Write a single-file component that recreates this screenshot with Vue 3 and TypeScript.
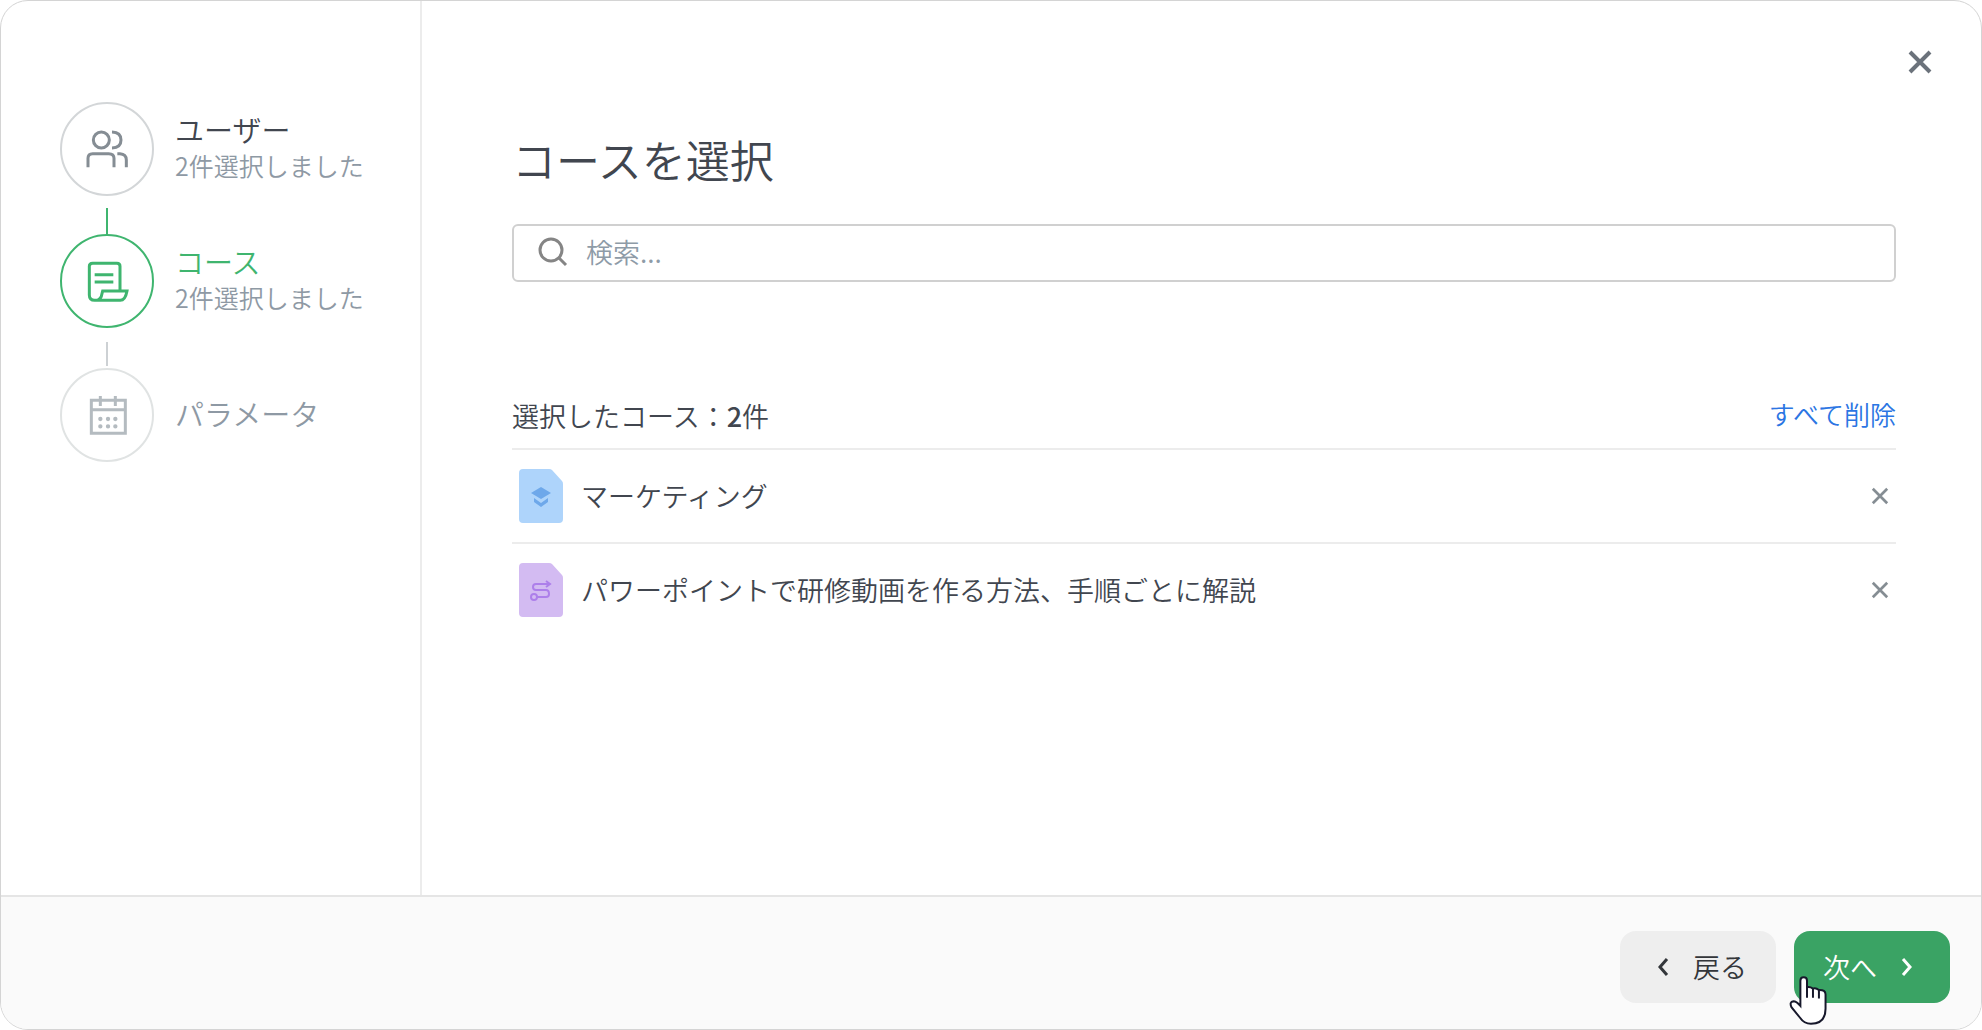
<script setup lang="ts">
import { ref } from 'vue'

type Step = { id: string; label: string; note?: string; state: 'done' | 'active' | 'pending' }
type Course = { id: number; title: string; kind: 'course' | 'path' }

const steps: Step[] = [
  { id: 'users', label: 'ユーザー', note: '2件選択しました', state: 'done' },
  { id: 'courses', label: 'コース', note: '2件選択しました', state: 'active' },
  { id: 'params', label: 'パラメータ', state: 'pending' },
]

const courses = ref<Course[]>([
  { id: 1, title: 'マーケティング', kind: 'course' },
  { id: 2, title: 'パワーポイントで研修動画を作る方法、手順ごとに解説', kind: 'path' },
])
const query = ref('')

function remove(id: number) {
  courses.value = courses.value.filter((c) => c.id !== id)
}
</script>

<template>
  <div class="dialog" role="dialog" aria-labelledby="dialog-title">
    <div class="body">
      <ol class="steps">
        <li v-for="step in steps" :key="step.id" :class="['step', step.state]">
          <span class="circle">
            <svg v-if="step.id === 'users'" viewBox="0 0 144 144" aria-hidden="true">
              <circle cx="55" cy="45" r="24" />
              <path d="M87 21Q114 22 114 45Q114 68 87 69M15 127V100Q15 86 29 86H77Q93 86 93 100V127M103 86H111Q130 87 130 105V127" />
            </svg>
            <svg v-else-if="step.id === 'courses'" viewBox="0 0 144 144" aria-hidden="true">
              <path d="M111 101V28Q111 19 102 19H29Q19 19 19 28V114Q19 130 35 130H112Q127 130 132 102H59L55 118Q50 130 38 130M35 53H91M35 75H91" />
            </svg>
            <svg v-else viewBox="0 0 144 144" aria-hidden="true">
              <path d="M25 28H127V127H25ZM25 56H127M52 15V45M97 15V45" />
              <path class="dots" d="M52 84h.1M75 84h.1M97 84h.1M52 106h.1M75 106h.1M97 106h.1" />
            </svg>
          </span>
          <span class="text">
            <span class="label">{{ step.label }}</span>
            <span v-if="step.note" class="note">{{ step.note }}</span>
          </span>
        </li>
      </ol>

      <main class="content">
        <button class="close" type="button" aria-label="閉じる">
          <svg viewBox="0 0 24 24" aria-hidden="true"><path d="M2 2L22 22M22 2L2 22" /></svg>
        </button>
        <h1 id="dialog-title">コースを選択</h1>
        <label class="search">
          <svg viewBox="0 0 30 30" aria-hidden="true">
            <circle cx="13" cy="13" r="11" /><path d="M21 21L28 28" />
          </svg>
          <input v-model="query" type="text" placeholder="検索..." aria-label="検索" />
        </label>

        <div class="list-head">
          <h2>選択したコース：<b>{{ courses.length }}</b>件</h2>
          <button class="clear" type="button" @click="courses = []">すべて削除</button>
        </div>
        <ul class="list">
          <li v-for="course in courses" :key="course.id">
            <svg :class="['file', course.kind]" viewBox="0 0 44 54" aria-hidden="true">
              <path class="sheet" d="M4 0H30Q32 0 33 1L43 12Q44 13 44 15V50Q44 54 40 54H4Q0 54 0 50V4Q0 0 4 0Z" />
              <template v-if="course.kind === 'course'">
                <path class="fill" d="M22 18L32 24L22 30L12 24Z" />
                <path class="fill" d="M15 29L22 34L29 29V33L22 38L15 33Z" />
              </template>
              <template v-else>
                <path class="line" d="M30 21H17Q14 21 14 24Q14 27 17 27H27Q30 27 30 31Q30 34 27 34H18M27 18L31 21L27 24" />
                <circle class="line" cx="15" cy="34" r="3" />
              </template>
            </svg>
            <span class="title">{{ course.title }}</span>
            <button class="remove" type="button" :aria-label="course.title + 'を削除'" @click="remove(course.id)">
              <svg viewBox="0 0 20 20" aria-hidden="true"><path d="M2 2L18 18M18 2L2 18" /></svg>
            </button>
          </li>
        </ul>
      </main>
    </div>

    <footer class="actions">
      <button class="back" type="button">
        <svg viewBox="0 0 12 20" aria-hidden="true"><path d="M10 2L3 10L10 18" /></svg>
        戻る
      </button>
      <button class="next" type="button">
        次へ
        <svg viewBox="0 0 12 20" aria-hidden="true"><path d="M2 2L9 10L2 18" /></svg>
        <svg class="pointer" viewBox="628 286 114 148" aria-hidden="true">
          <path d="M662 376V300Q662 290 672 290Q682 290 682 300V320Q690 317 700 324Q708 320 718 328Q738 327 738 342V385Q738 430 694 430Q673 430 661 412L635 380Q628 364 641 362Q650 362 662 376Z" />
          <path d="M682 318V352M700 324V352M718 328V354" />
        </svg>
      </button>
    </footer>
  </div>
</template>

<style>
body {
  margin: 0;
  background: #fff;
}
</style>

<style scoped>
* {
  box-sizing: border-box;
}
.dialog {
  display: flex;
  flex-direction: column;
  min-height: 100vh;
  border: 1px solid #d4d4d4;
  border-radius: 28px;
  background: #fff;
  color: #41464f;
  font-family: "Noto Sans CJK JP", sans-serif;
  font-weight: 350;
  font-size: 27px;
  line-height: 36px;
}
button {
  padding: 0;
  border: 0;
  background: none;
  color: inherit;
  font: inherit;
  cursor: pointer;
}
svg {
  display: block;
  fill: none;
  stroke: currentColor;
}
.body {
  display: flex;
  flex: 1;
}
.steps {
  width: 421px;
  flex: none;
  margin: 0;
  padding: 101px 0 0 59px;
  border-right: 2px solid #ececec;
  list-style: none;
}
.step {
  position: relative;
  display: flex;
  align-items: center;
  gap: 21px;
  height: 94px;
  margin-bottom: 38px;
}
.step + .step::before {
  content: "";
  position: absolute;
  left: 46px;
  bottom: 100%;
  width: 2px;
  height: 26px;
  background: #cdd1d4;
}
.step.active::before {
  background: #3fb56f;
}
.step.pending {
  margin-top: 40px;
}
.step.active {
  margin-bottom: 0;
}
.step.pending::before {
  bottom: calc(100% + 2px);
  height: 24px;
}
.circle {
  display: flex;
  flex: none;
  align-items: center;
  justify-content: center;
  width: 94px;
  height: 94px;
  border: 2px solid #d3d6d8;
  border-radius: 50%;
  color: #858d94;
}
.circle svg {
  width: 48px;
  height: 48px;
  stroke-width: 9;
}
.circle .dots {
  stroke-width: 13;
  stroke-linecap: round;
}
.active .circle {
  border-color: #3fb56f;
  color: #3fb56f;
}
.pending .circle {
  border-color: #e0e3e3;
  color: #b4bbc0;
}
.text {
  display: flex;
  flex-direction: column;
  padding-bottom: 4px;
}
.label {
  font-size: 29px;
}
.active .label {
  color: #3fb56f;
}
.note {
  font-size: 25px;
}
.note,
.pending .label {
  color: #8e99a4;
}
.content {
  position: relative;
  flex: 1;
  min-width: 0;
  padding: 128px 85px 40px 90px;
}
.close {
  position: absolute;
  top: 49px;
  right: 49px;
}
.close svg {
  width: 24px;
  height: 24px;
  stroke-width: 4;
  color: #6b727b;
}
h1 {
  margin: 0 0 35px;
  font-size: 44px;
  font-weight: 350;
  line-height: 60px;
}
.search {
  display: flex;
  align-items: center;
  gap: 18px;
  height: 58px;
  padding: 0 24px 2px;
  border: 2px solid #d0d0d0;
  border-radius: 6px;
}
.search svg {
  width: 30px;
  height: 30px;
  stroke-width: 3;
  color: #858585;
}
input {
  flex: 1;
  min-width: 0;
  padding: 0;
  border: 0;
  outline: 0;
  background: none;
  color: inherit;
  font: inherit;
}
input::placeholder {
  color: #8e9ba7;
  opacity: 1;
}
.list-head {
  display: flex;
  align-items: center;
  justify-content: space-between;
  margin-top: 116px;
  padding-bottom: 14px;
}
h2 {
  margin: 0;
  font: inherit;
}
h2 b {
  font-weight: 500;
}
.clear {
  padding-bottom: 4px;
  color: #2b75e3;
  font-size: 26px;
  line-height: 32px;
}
.list {
  margin: 0;
  padding: 0;
  list-style: none;
}
.list li {
  display: flex;
  align-items: center;
  gap: 18px;
  height: 94px;
  padding: 0 7px;
  border-top: 2px solid #ececec;
}
.file {
  flex: none;
  width: 44px;
  height: 54px;
  color: #6ea8ea;
}
.sheet {
  fill: #aed4fb;
  stroke: none;
}
.fill {
  fill: currentColor;
  stroke: none;
}
.path {
  color: #ad7fea;
}
.path .sheet {
  fill: #d3bbf2;
}
.line {
  stroke-width: 2;
}
.title {
  flex: 1;
}
.remove svg {
  width: 18px;
  height: 18px;
  stroke-width: 3;
  color: #858d93;
}
.actions {
  display: flex;
  justify-content: flex-end;
  gap: 18px;
  padding: 34px 31px 26px;
  border-top: 2px solid #e5e5e5;
  border-radius: 0 0 27px 27px;
  background: #fafafa;
}
.back,
.next {
  position: relative;
  display: flex;
  align-items: center;
  justify-content: center;
  gap: 24px;
  width: 156px;
  height: 72px;
  border-radius: 16px;
  background: #eee;
  color: #33363a;
}
.back {
  padding-left: 8px;
}
.next {
  padding-right: 8px;
  background: #3aa364;
  color: #fff;
}
.back svg,
.next svg {
  width: 12px;
  height: 20px;
  stroke-width: 3;
}
.next .pointer {
  position: absolute;
  top: 45px;
  left: -5px;
  width: 38px;
  height: 49px;
  fill: #fff;
  stroke: #17182b;
  stroke-width: 6;
}
</style>
